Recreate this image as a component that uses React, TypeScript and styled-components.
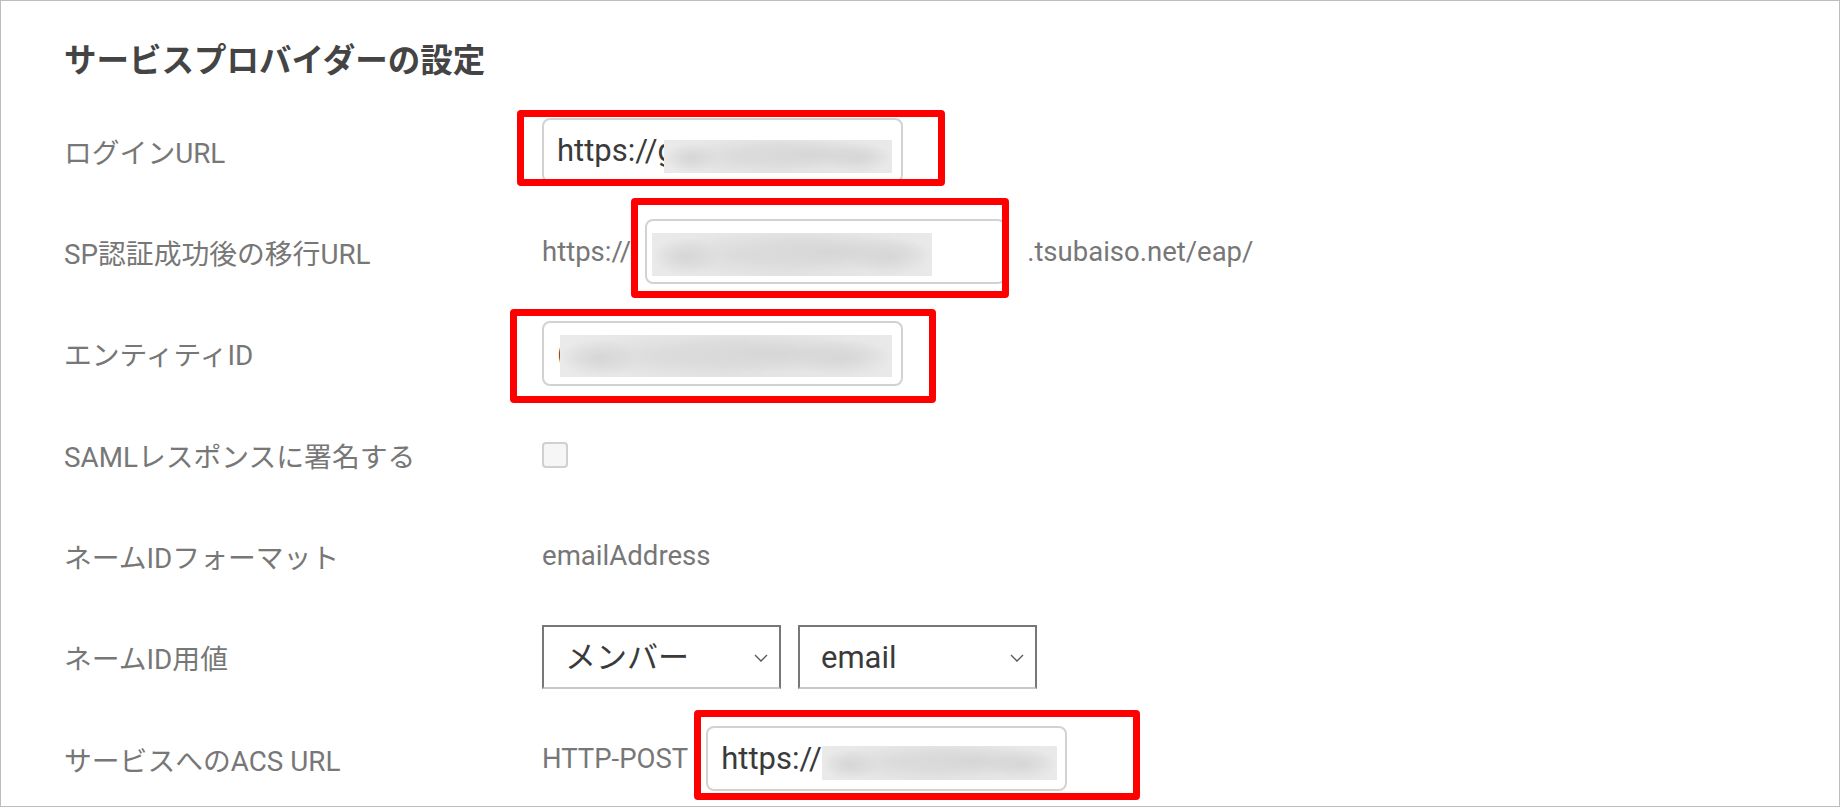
import React from "react";
import styled, { createGlobalStyle } from "styled-components";

const GlobalStyle = createGlobalStyle`
  html, body { margin: 0; padding: 0; background: #fff; }
  body { font-family: Roboto, "Noto Sans CJK JP", sans-serif; }
`;

const Panel = styled.div`
  box-sizing: border-box;
  width: 1840px;
  height: 807px;
  border: 1px solid #bdbdbd;
  overflow: hidden;
  padding-left: 63px;
  font-family: Roboto, "Noto Sans CJK JP", sans-serif;
  background: #fff;
`;

const Title = styled.h2`
  margin: 0;
  padding: 40px 0 19px;
  line-height: 40px;
  font-size: 32.5px;
  font-weight: 700;
  color: #444;
`;

const Row = styled.div`
  display: grid;
  grid-template-columns: 478px auto;
  align-items: center;
  height: 101.33px;
`;

const Label = styled.div`
  font-size: 27.8px;
  color: #777;
  white-space: nowrap;
`;

const Value = styled.div`
  display: flex;
  align-items: center;
  font-size: 27.6px;
  color: #777;
  white-space: nowrap;
`;

const Affix = styled.span<{ $before?: number; $after?: number }>`
  margin-left: ${(p) => p.$before ?? 0}px;
  margin-right: ${(p) => p.$after ?? 0}px;
  font-size: 27.5px;
  color: #777;
`;

const FieldWrap = styled.div`
  position: relative;
  display: inline-flex;
`;

const TextInput = styled.input`
  box-sizing: border-box;
  width: 361px;
  height: 65px;
  border: 2px solid #d2d2d2;
  border-radius: 8px;
  background: #fff;
  padding: 0 13px;
  font-family: Roboto, "Noto Sans CJK JP", sans-serif;
  font-size: 31px;
  color: #3a3a3a;
  outline: none;
`;

const Blur = styled.span<{ $x: number; $y: number; $w: number; $h: number }>`
  position: absolute;
  left: ${(p) => p.$x}px;
  top: ${(p) => p.$y}px;
  width: ${(p) => p.$w}px;
  height: ${(p) => p.$h}px;
  background:
    radial-gradient(closest-side at 12% 55%, #d6d6d6, rgba(214, 214, 214, 0)),
    radial-gradient(closest-side at 38% 50%, #dadada, rgba(218, 218, 218, 0)),
    radial-gradient(closest-side at 62% 45%, #d4d4d4, rgba(212, 212, 212, 0)),
    radial-gradient(closest-side at 85% 55%, #d8d8d8, rgba(216, 216, 216, 0)),
    linear-gradient(90deg, #eaeaea, #e2e2e2 50%, #e9e9e9);
  pointer-events: none;
`;

const Highlight = styled.span<{ $x: number; $y: number; $w: number; $h: number }>`
  position: absolute;
  left: ${(p) => p.$x}px;
  top: ${(p) => p.$y}px;
  width: ${(p) => p.$w}px;
  height: ${(p) => p.$h}px;
  box-sizing: border-box;
  border: 7px solid #ff0000;
  border-radius: 4px;
  pointer-events: none;
  z-index: 2;
`;

const Checkbox = styled.input`
  appearance: none;
  -webkit-appearance: none;
  box-sizing: border-box;
  margin: 0;
  width: 26px;
  height: 26px;
  border: 2px solid #d0d0d0;
  border-radius: 4px;
  background: #f6f6f6;
`;

const SelectGroup = styled.div`
  display: flex;
  gap: 17px;
`;

const SelectWrap = styled.div`
  position: relative;
  display: inline-flex;
`;

const Select = styled.select`
  appearance: none;
  -webkit-appearance: none;
  box-sizing: border-box;
  width: 239px;
  height: 64px;
  border: 2px solid #777;
  border-bottom-color: #c8c8c8;
  border-radius: 0;
  background: #fff;
  padding: 0 40px 0 21px;
  font-family: Roboto, "Noto Sans CJK JP", sans-serif;
  font-size: 31px;
  color: #3a3a3a;
  outline: none;
`;

const Chevron = styled.svg`
  position: absolute;
  right: 13px;
  top: 50%;
  width: 14px;
  height: 8px;
  margin-top: -3px;
  pointer-events: none;
`;

const SelectBox: React.FC<{ value: string; options: string[] }> = ({ value, options }) => (
  <SelectWrap>
    <Select defaultValue={value}>
      {options.map((o) => (
        <option key={o} value={o}>
          {o}
        </option>
      ))}
    </Select>
    <Chevron viewBox="0 0 14 8">
      <path d="M1 1 L7 7 L13 1" fill="none" stroke="#555" strokeWidth="1.3" />
    </Chevron>
  </SelectWrap>
);

type Box = { x: number; y: number; w: number; h: number };

const Field: React.FC<{ value: string; blur: Box; mark: Box }> = ({ value, blur, mark }) => (
  <FieldWrap>
    <TextInput readOnly value={value} />
    <Blur $x={blur.x} $y={blur.y} $w={blur.w} $h={blur.h} />
    <Highlight $x={mark.x} $y={mark.y} $w={mark.w} $h={mark.h} />
  </FieldWrap>
);

export default function App() {
  return (
    <>
      <GlobalStyle />
      <Panel>
        <Title>サービスプロバイダーの設定</Title>
        <Row>
          <Label>ログインURL</Label>
          <Value>
            <Field
              value="https://gxxxxxxxxxxxx.tsubaiso.net/"
              blur={{ x: 122, y: 22, w: 228, h: 33 }}
              mark={{ x: -25, y: -8, w: 428, h: 76 }}
            />
          </Value>
        </Row>
        <Row>
          <Label>SP認証成功後の移行URL</Label>
          <Value>
            <Affix $after={14}>https://</Affix>
            <Field
              value="xxxxxxxxxxxxxxxx"
              blur={{ x: 7, y: 14, w: 280, h: 43 }}
              mark={{ x: -14, y: -21, w: 378, h: 100 }}
            />
            <Affix $before={21}>.tsubaiso.net/eap/</Affix>
          </Value>
        </Row>
        <Row>
          <Label>エンティティID</Label>
          <Value>
            <Field
              value="(xxxxxxxxxxxxxxxxxxx"
              blur={{ x: 18, y: 14, w: 332, h: 42 }}
              mark={{ x: -32, y: -12, w: 426, h: 94 }}
            />
          </Value>
        </Row>
        <Row>
          <Label>SAMLレスポンスに署名する</Label>
          <Value>
            <Checkbox type="checkbox" />
          </Value>
        </Row>
        <Row>
          <Label>ネームIDフォーマット</Label>
          <Value>emailAddress</Value>
        </Row>
        <Row>
          <Label>ネームID用値</Label>
          <Value>
            <SelectGroup>
              <SelectBox value="メンバー" options={["メンバー"]} />
              <SelectBox value="email" options={["email"]} />
            </SelectGroup>
          </Value>
        </Row>
        <Row>
          <Label>サービスへのACS URL</Label>
          <Value>
            <Affix $after={18}>HTTP-POST</Affix>
            <Field
              value="https://xxxxxxxxxxxxxxx"
              blur={{ x: 116, y: 20, w: 235, h: 34 }}
              mark={{ x: -12, y: -16, w: 446, h: 90 }}
            />
          </Value>
        </Row>
      </Panel>
    </>
  );
}
